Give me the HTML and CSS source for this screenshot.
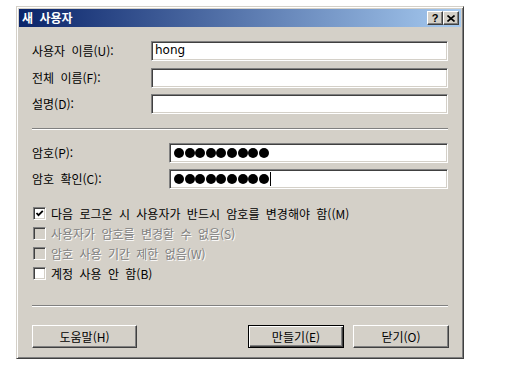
FILE: index.html
```html
<!DOCTYPE html>
<html lang="ko">
<head>
    <meta charset="UTF-8">
    <meta name="viewport" content="width=device-width, initial-scale=1.0">
    <title>새 사용자</title>
    <link rel="stylesheet" href="styles.css">
</head>
<body>
    <div class="dialog">
        <div class="titlebar">
            <span class="title">새 사용자</span>
            <div class="caption-buttons">
                <div class="cap-btn help">?</div>
                <div class="cap-btn close">
                    <svg width="8" height="7" viewBox="0 0 8 7">
                        <path d="M0.5 0.5 L7.5 6.5 M7.5 0.5 L0.5 6.5" stroke="#000" stroke-width="1.6" fill="none"/>
                    </svg>
                </div>
            </div>
        </div>

        <div class="content">
            <div class="fields">
                <label>사용자 이름(U):</label>
                <div class="textbox">hong</div>
                <label>전체 이름(F):</label>
                <div class="textbox"></div>
                <label>설명(D):</label>
                <div class="textbox"></div>
            </div>

            <div class="separator"></div>

            <div class="fields pw">
                <label>암호(P):</label>
                <div class="textbox dots">
                    <span class="dot"></span><span class="dot"></span><span class="dot"></span><span class="dot"></span>
                    <span class="dot"></span><span class="dot"></span><span class="dot"></span><span class="dot"></span>
                    <span class="dot"></span>
                </div>
                <label>암호 확인(C):</label>
                <div class="textbox dots">
                    <span class="dot"></span><span class="dot"></span><span class="dot"></span><span class="dot"></span>
                    <span class="dot"></span><span class="dot"></span><span class="dot"></span><span class="dot"></span>
                    <span class="dot"></span><span class="caret"></span>
                </div>
            </div>

            <div class="checks">
                <div class="check">
                    <span class="box">
                        <svg width="9" height="9" viewBox="0 0 9 9">
                            <path d="M1.5 4 L3.5 6.2 L7.8 1.8" stroke="#000" stroke-width="1.8" fill="none"/>
                        </svg>
                    </span>
                    다음 로그온 시 사용자가 반드시 암호를 변경해야 함((M)
                </div>
                <div class="check disabled"><span class="box"></span>사용자가 암호를 변경할 수 없음(S)</div>
                <div class="check disabled"><span class="box"></span>암호 사용 기간 제한 없음(W)</div>
                <div class="check"><span class="box"></span>계정 사용 안 함(B)</div>
            </div>

            <div class="separator bottom"></div>

            <div class="buttons">
                <div class="btn help-btn">도움말(H)</div>
                <div class="spacer"></div>
                <div class="btn default">만들기(E)</div>
                <div class="btn">닫기(O)</div>
            </div>
        </div>
    </div>
</body>
</html>
```

FILE: styles.css
```css
body {
    margin: 0;
    background: #fff;
    font-family: "Noto Sans CJK KR", "Liberation Sans", sans-serif;
    font-size: 12px;
    word-spacing: 3px;
    color: #000;
}

.dialog {
    margin: 6px 0 0 16px;
    width: 448px;
    height: 353px;
    box-sizing: border-box;
    background: #d4d0c8;
    border: 1px solid;
    border-color: #d4d0c8 #404040 #404040 #d4d0c8;
    box-shadow: inset 1px 1px #fff, inset -1px -1px #808080;
    padding: 2px;
    display: flex;
    flex-direction: column;
}

.titlebar {
    height: 18px;
    background: linear-gradient(to right, #0a246a, #a6caf0);
    display: flex;
    align-items: center;
    padding: 0 2px 0 3px;
}
.title {
    color: #fff;
    font-weight: bold;
    font-size: 12px;
    line-height: 18px;
    flex: 1;
}
.caption-buttons {
    display: flex;
}
.cap-btn {
    width: 16px;
    height: 14px;
    box-sizing: border-box;
    background: #d4d0c8;
    border: 1px solid;
    border-color: #fff #404040 #404040 #fff;
    box-shadow: inset -1px -1px #808080;
    display: flex;
    align-items: center;
    justify-content: center;
    font-family: "Liberation Sans", sans-serif;
    font-weight: bold;
    font-size: 11px;
    line-height: 12px;
}

.content {
    padding: 14px 12px 0 13px;
    display: flex;
    flex-direction: column;
}

.fields {
    display: grid;
    grid-template-columns: 119px 1fr;
    row-gap: 6.5px;
    align-items: center;
}
.fields.pw {
    grid-template-columns: 137px 1fr;
    margin-top: 13px;
    row-gap: 6px;
}
label {
    line-height: 14px;
}

.textbox {
    height: 20px;
    box-sizing: border-box;
    background: #fff;
    border: 1px solid;
    border-color: #808080 #fff #fff #808080;
    box-shadow: inset 1px 1px #404040, inset -1px -1px #d4d0c8;
    padding: 0 3px;
    line-height: 17px;
    font-family: "DejaVu Sans", sans-serif;
    font-size: 12px;
    margin-right: 1px;
}
.dots {
    display: flex;
    align-items: center;
    padding-left: 4px;
}
.dot {
    width: 10px;
    height: 10px;
    border-radius: 50%;
    background: #000;
    margin-right: 0.6px;
}
.caret {
    width: 1px;
    height: 14px;
    background: #000;
    margin-left: 1px;
}

.separator {
    height: 1px;
    border-top: 1px solid #808080;
    background: #fff;
    margin: 14px 1px 0 0;
}
.separator.bottom {
    margin-top: 18px;
}

.checks {
    margin-top: 18px;
    display: flex;
    flex-direction: column;
}
.check {
    height: 20px;
    display: flex;
    align-items: flex-start;
    line-height: 13px;
    margin-left: 1px;
}
.box {
    width: 13px;
    height: 13px;
    box-sizing: border-box;
    background: #fff;
    border: 1px solid;
    border-color: #808080 #fff #fff #808080;
    box-shadow: inset 1px 1px #404040, inset -1px -1px #d4d0c8;
    margin-right: 5px;
    display: flex;
    align-items: center;
    justify-content: center;
    flex-shrink: 0;
}
.check.disabled {
    color: #808080;
    text-shadow: 1px 1px #fff;
}
.check.disabled .box {
    background: #d4d0c8;
}

.buttons {
    margin-top: 18px;
    display: flex;
    gap: 9px;
}
.spacer {
    flex: 1;
}
.btn {
    height: 23px;
    width: 96px;
    box-sizing: border-box;
    border: 1px solid;
    border-color: #fff #404040 #404040 #fff;
    box-shadow: inset -1px -1px #808080;
    display: flex;
    align-items: center;
    justify-content: center;
    line-height: 14px;
}
.btn.help-btn {
    width: 105px;
}
.btn.default {
    border: 1px solid #000;
    box-shadow: inset 1px 1px #fff, inset -1px -1px #404040, inset -2px -2px #808080;
}
```
